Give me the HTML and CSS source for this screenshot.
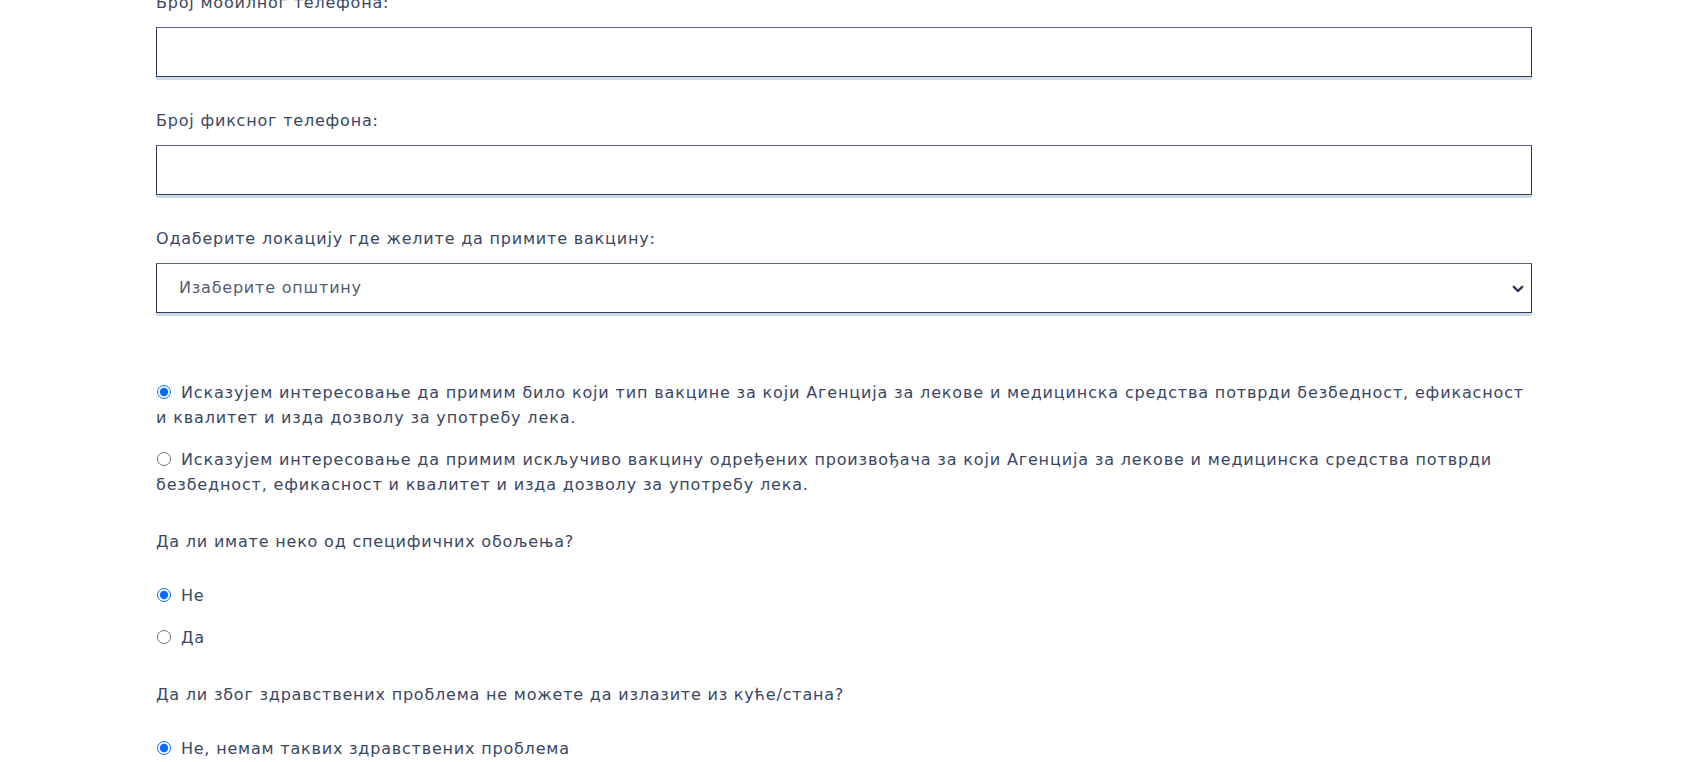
FILE: index.html
```html
<!DOCTYPE html>
<html lang="sr">
<head>
<meta charset="utf-8">
<title>Пријава за вакцинацију</title>
<link rel="stylesheet" href="styles.css">
</head>
<body>
<form class="form">
  <div class="field">
    <label class="label" for="mobile">Број мобилног телефона:</label>
    <input class="input" id="mobile" type="text">
  </div>
  <div class="field">
    <label class="label" for="landline">Број фиксног телефона:</label>
    <input class="input" id="landline" type="text">
  </div>
  <div class="field">
    <label class="label" for="location">Одаберите локацију где желите да примите вакцину:</label>
    <div class="select-wrap">
      <select class="select" id="location">
        <option>Изаберите општину</option>
      </select>
      <svg class="chevron" width="12" height="8" viewBox="0 0 12 8" aria-hidden="true"><path d="M1.8 1.8 L6 6 L10.2 1.8" fill="none" stroke="#2e3a5c" stroke-width="2.4" stroke-linecap="round" stroke-linejoin="round"/></svg>
    </div>
  </div>

  <div class="group group-type">
    <label class="choice choice-long"><input class="radio" type="radio" name="type" checked> Исказујем интересовање да примим било који тип вакцине за који Агенција за лекове и медицинска средства потврди безбедност, ефикасност и квалитет и изда дозволу за употребу лека.</label>
    <label class="choice choice-long"><input class="radio" type="radio" name="type"> Исказујем интересовање да примим искључиво вакцину одређених произвођача за који Агенција за лекове и медицинска средства потврди безбедност, ефикасност и квалитет и изда дозволу за употребу лека.</label>
  </div>

  <p class="question">Да ли имате неко од специфичних обољења?</p>
  <div class="group">
    <label class="choice"><input class="radio" type="radio" name="disease" checked> Не</label>
    <label class="choice"><input class="radio" type="radio" name="disease"> Да</label>
  </div>

  <p class="question question-next">Да ли због здравствених проблема не можете да излазите из куће/стана?</p>
  <div class="group">
    <label class="choice"><input class="radio" type="radio" name="home" checked> Не, немам таквих здравствених проблема</label>
  </div>
</form>
</body>
</html>
```

FILE: styles.css
```css
html, body {
  margin: 0;
  padding: 0;
  background: #ffffff;
}

body {
  font-family: "DejaVu Sans", "Noto Sans", sans-serif;
  font-size: 16px;
  line-height: 24px;
  color: #3a4763;
  overflow: hidden;
}

.form {
  display: flex;
  flex-direction: column;
  width: 1376px;
  margin: -9px 0 0 156px;
}

.field {
  margin-bottom: 32px;
}

.label {
  display: block;
  margin-bottom: 12px;
  letter-spacing: 0.8px;
}

.input,
.select {
  display: block;
  box-sizing: border-box;
  width: 100%;
  height: 50px;
  margin: 0;
  border: 1px solid #2f3b63;
  border-top-color: #56628a;
  border-radius: 0;
  background: #ffffff;
  box-shadow: 0 3px 0 #cddbe3;
  font: inherit;
  color: inherit;
  outline: none;
}

.select-wrap {
  position: relative;
}

.select {
  appearance: none;
  -webkit-appearance: none;
  padding: 0 40px 0 22px;
  color: #545d74;
  font-size: 16px;
  letter-spacing: 0.8px;
}

.chevron {
  position: absolute;
  right: 8px;
  top: 22px;
  pointer-events: none;
}

.group {
  display: flex;
  flex-direction: column;
  gap: 18px;
}

.group-type {
  margin-top: 35px;
  margin-bottom: 33px;
  gap: 17px;
}

.choice {
  display: block;
  letter-spacing: 0.8px;
}

.choice-long {
  letter-spacing: 0.85px;
  line-height: 25px;
}

.radio {
  width: 14px;
  height: 14px;
  margin: 0 4px 0 1px;
  vertical-align: -1px;
  accent-color: #0a6cff;
}

.question {
  margin: 0 0 30px;
  letter-spacing: 0.8px;
}

.question-next {
  margin-top: 33px;
}
```
